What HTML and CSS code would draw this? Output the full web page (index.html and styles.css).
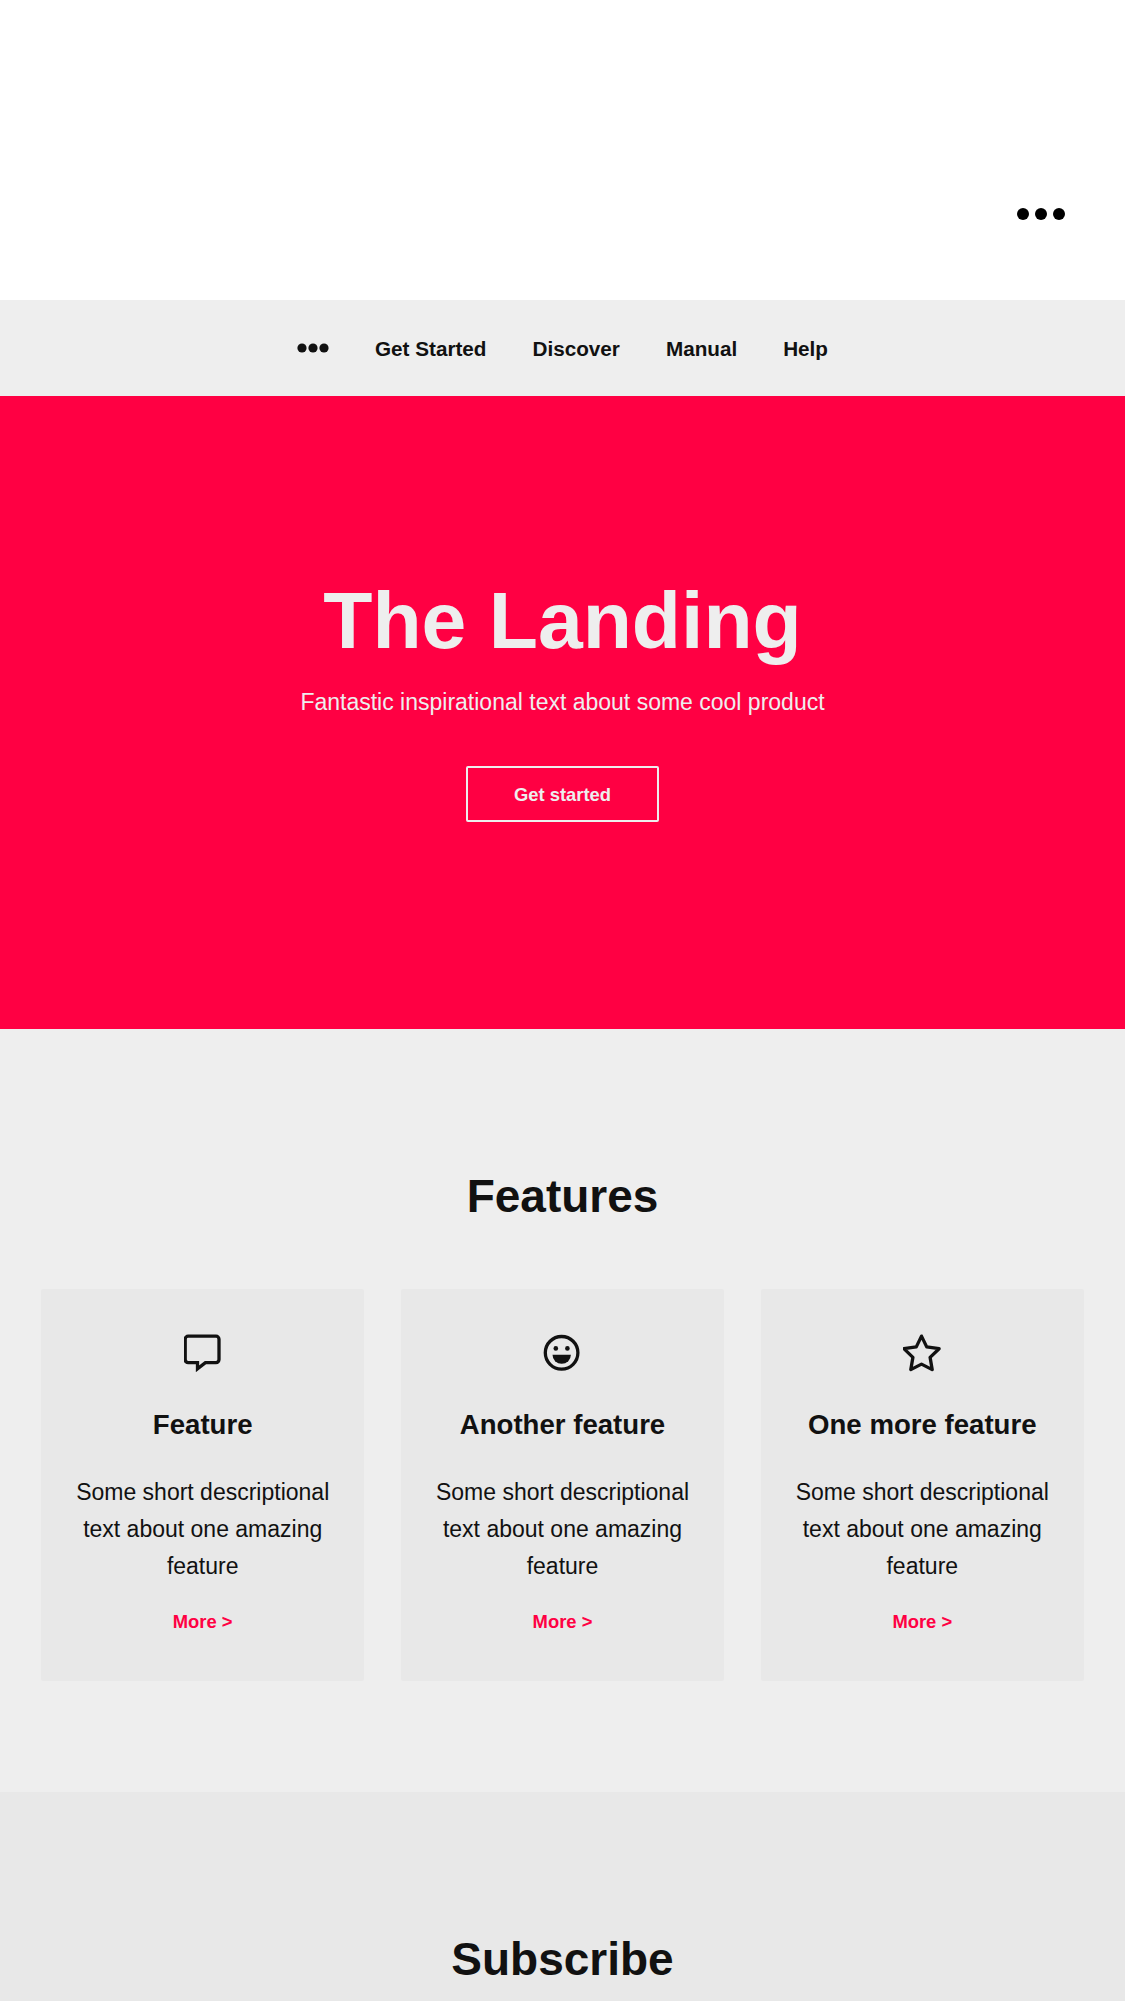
FILE: index.html
```html
<!DOCTYPE html>
<html lang="en">
<head>
<meta charset="utf-8">
<title>The Landing</title>
<link rel="stylesheet" href="styles.css">
</head>
<body>
<header class="topbar">
  <svg class="topbar-dots" viewBox="0 0 48 12"><circle cx="6" cy="6" r="6"/><circle cx="24" cy="6" r="6"/><circle cx="42" cy="6" r="6"/></svg>
</header>
<nav class="nav">
  <a class="nav-logo"><svg viewBox="0 0 32 10"><circle cx="5" cy="5" r="4.6"/><circle cx="16" cy="5" r="4.6"/><circle cx="27" cy="5" r="4.6"/></svg></a>
  <a>Get Started</a>
  <a>Discover</a>
  <a>Manual</a>
  <a>Help</a>
</nav>
<section class="hero">
  <h1>The Landing</h1>
  <p>Fantastic inspirational text about some cool product</p>
  <a class="button">Get started</a>
</section>
<section class="features">
  <h2>Features</h2>
  <div class="cards">
    <article class="card">
      <svg class="icon" viewBox="0 0 40 40"><path d="M4.2 4.2h27.8a3 3 0 0 1 3 3v20.4a3 3 0 0 1-3 3H21.4L13.5 36.8v-6.2H4.2a3 3 0 0 1-3-3V7.2a3 3 0 0 1 3-3z"/></svg>
      <h3>Feature</h3>
      <p>Some short descriptional text about one amazing feature</p>
      <a class="more">More &gt;</a>
    </article>
    <article class="card">
      <svg class="icon" viewBox="0 0 40 40"><circle cx="18.6" cy="20.8" r="16.3"/><circle class="solid" cx="12.8" cy="16.4" r="2.3"/><circle class="solid" cx="24.4" cy="16.4" r="2.3"/><path class="solid" d="M9.5 22.8h18.4a9.2 9 0 0 1-18.4 0z"/></svg>
      <h3>Another feature</h3>
      <p>Some short descriptional text about one amazing feature</p>
      <a class="more">More &gt;</a>
    </article>
    <article class="card">
      <svg class="icon" viewBox="0 0 40 40"><path d="M18.5 4.1l5.2 10.8 12.4 1.8-9 8.7 2.1 12.2-10.7-5.5-10.7 5.5 2.1-12.2-9-8.7 12.4-1.8z"/></svg>
      <h3>One more feature</h3>
      <p>Some short descriptional text about one amazing feature</p>
      <a class="more">More &gt;</a>
    </article>
  </div>
</section>
<section class="subscribe">
  <h2>Subscribe</h2>
</section>
</body>
</html>
```
FILE: styles.css
```css
* { box-sizing: border-box; margin: 0; padding: 0; }
html { overflow: hidden; }
body {
  height: 2001px;
  overflow: hidden;
  background: #eee;
  color: #111;
  font: 23px/37px "Liberation Sans", Arial, sans-serif;
}
.topbar { display: flex; justify-content: flex-end; height: 300px; padding: 208.2px 60px 0; background: #fff; }
.topbar-dots { width: 48px; height: 12px; fill: #000; }
.nav { display: flex; justify-content: center; gap: 46px; height: 96.3px; padding-top: 29.5px; font-size: 20.7px; font-weight: bold; }
.nav-logo { display: flex; padding-top: 13.3px; }
.nav-logo svg { width: 32px; height: 10px; fill: #111; }
.hero { display: flex; flex-direction: column; align-items: center; height: 632.7px; padding-top: 178.2px; background: #ff0043; color: #eee; }
h1 { font-size: 80.5px; line-height: 92px; }
.hero p { margin-top: 17.5px; }
.button { width: 193px; height: 56px; margin-top: 45.3px; border: 2px solid #eee; border-radius: 2px; font-size: 18.4px; font-weight: bold; line-height: 53px; text-align: center; }
h2 { font-size: 46px; line-height: 56px; text-align: center; }
.features { height: 763px; padding: 138.8px 41.3px 0; }
.cards { display: grid; grid-template-columns: repeat(3, 1fr); gap: 37px; margin-top: 65.2px; }
.card { display: flex; flex-direction: column; align-items: center; height: 391.7px; padding: 43px 30px 0; border-radius: 2px; background: #e8e8e8; text-align: center; }
.icon { width: 40px; height: 40px; margin-left: 2px; fill: none; stroke: #111; stroke-width: 3.3; }
.card:last-child .icon { stroke-linejoin: round; }
.icon .solid { fill: #111; stroke: none; }
h3 { margin-top: 34.4px; font-size: 27.6px; line-height: 37px; white-space: nowrap; }
.card p { margin-top: 30.8px; }
.more { margin-top: 18.2px; color: #ff0043; font-size: 18.4px; font-weight: bold; }
.subscribe { height: 300px; padding-top: 138.8px; background: #e8e8e8; }
```
